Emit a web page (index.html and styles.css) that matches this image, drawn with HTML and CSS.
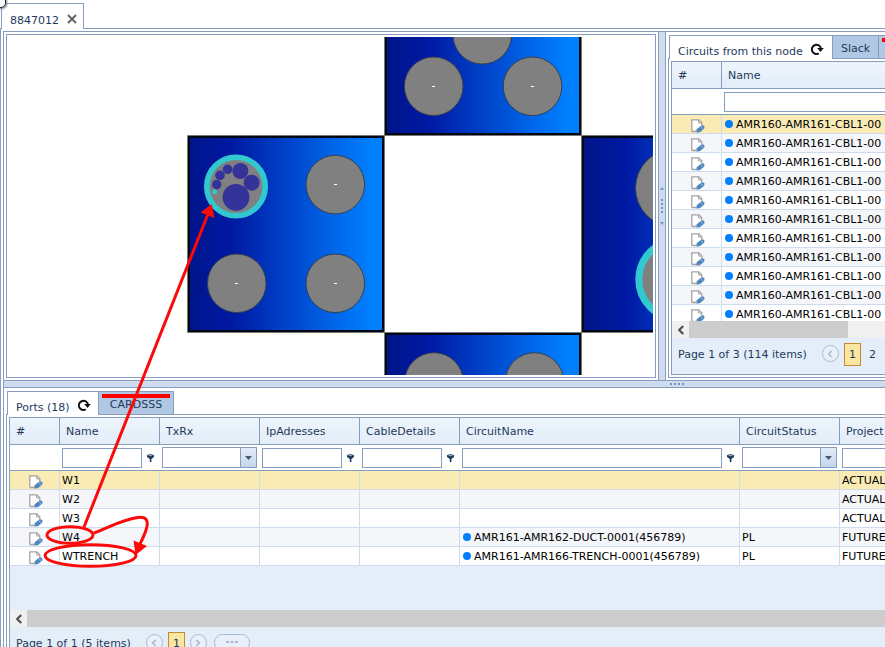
FILE: index.html
```html
<!DOCTYPE html>
<html lang="en">
<head>
<meta charset="utf-8">
<title>8847012</title>
<link rel="stylesheet" href="styles.css">
</head>
<body>
<svg class="defs" aria-hidden="true">
  <symbol id="edit" viewBox="0 0 14 14">
    <path d="M.8 12.5V.8h7l3 3v3M.8 12.5h4.4" fill="#fff" stroke="#a3a3a3" stroke-width="1.3"/>
    <path d="M7.6.8v3.2h3.2" fill="none" stroke="#a3a3a3"/>
    <path d="M5.2 13.5l.5-3.2 4.6-3.7h2.2l.9 1v1.8l-4.6 3.9z" fill="#4f86bf"/>
    <path d="M9.5 7.3l2.8 2.7" stroke="#dce8f5" stroke-width=".6"/>
  </symbol>
  <symbol id="refresh" viewBox="0 0 13 12">
    <path d="M7.8 10.3A4.6 4.6 0 1 1 10 5.8" fill="none" stroke="#111" stroke-width="2"/>
    <path d="M6.2 5h6.6L9.5 9z" fill="#111"/>
  </symbol>
  <symbol id="funnel" viewBox="0 0 7 8">
    <path d="M0 1.3Q3.5-.8 7 1.3V3L4.4 5v3H2.8V5L0 3z" fill="#1e395b"/>
    <path d="M1.5 1.6h4" stroke="#a9bad0" stroke-width=".9"/>
  </symbol>
  <symbol id="left" viewBox="0 0 8 10"><path d="M6.2 1L2.2 5l4 4" fill="none" stroke="currentColor" stroke-width="2.2"/></symbol>
  <symbol id="right" viewBox="0 0 8 10"><path d="M1.8 1l4 4-4 4" fill="none" stroke="currentColor" stroke-width="2.2"/></symbol>
  <symbol id="down" viewBox="0 0 7 4"><path d="M0 0h7L3.5 4z" fill="#44597a"/></symbol>
</svg>

<div class="app">
  <div class="corner"></div>
  <nav class="doc-tabs">
    <div class="doc-tab"><span>8847012</span>
      <button class="close" aria-label="Close tab"><svg viewBox="0 0 10 10"><path d="M1 1l8 8M9 1L1 9" stroke="#666" stroke-width="2"/></svg></button>
    </div>
  </nav>

  <main class="doc">
    <div class="split">
      <div class="upper">
        <section class="canvas-pane">
          <div class="canvas">
            <svg class="drawing" role="img" aria-label="Duct layout">
              <defs>
                <linearGradient id="wall">
                  <stop offset="0" stop-color="#00158a"/><stop offset=".22" stop-color="#0019a3"/>
                  <stop offset=".5" stop-color="#0042c8"/><stop offset=".75" stop-color="#0066ea"/>
                  <stop offset=".94" stop-color="#0080ff"/>
                </linearGradient>
              </defs>
              <g transform="translate(-9 -37)">
                <path d="M187.5 332.5V135.5H660M384.5 30V380M581.5 30V380M187.5 332.5H660" fill="none" stroke="#777"/>
                <rect x="386" y="136" width="195" height="196" fill="#fff"/>
                <g fill="url(#wall)" stroke="#000814" stroke-width="2">
                  <rect x="386" y="-61" width="194" height="195"/>
                  <rect x="189" y="137" width="194" height="194"/>
                  <rect x="583" y="137" width="194" height="194"/>
                  <rect x="386" y="334" width="194" height="194"/>
                </g>
                <g fill="#808080" stroke="#35404f">
                  <circle cx="482.3" cy="34.8" r="29.3"/><circle cx="433.7" cy="86.3" r="29.3"/><circle cx="532.5" cy="86.3" r="29.3"/>
                  <circle cx="335.3" cy="184.6" r="29.3"/><circle cx="236.8" cy="283.3" r="29.3"/><circle cx="335.3" cy="283.3" r="29.3"/>
                  <circle cx="434" cy="382" r="29.3"/><circle cx="534.5" cy="382" r="29.3"/>
                  <circle cx="674.5" cy="188" r="39"/>
                </g>
                <g fill="#808080" stroke="#32c8cf">
                  <circle cx="236" cy="186.5" r="29.2" stroke-width="5.6"/>
                  <circle cx="678" cy="279.5" r="39.2" stroke-width="7"/>
                </g>
                <g fill="#333399">
                  <circle cx="236" cy="197.3" r="13.4"/><circle cx="240.4" cy="171" r="8"/><circle cx="251.6" cy="182.7" r="8"/>
                  <circle cx="227.6" cy="169.3" r="4.8"/><circle cx="220" cy="175.4" r="4.8"/><circle cx="216.7" cy="184.6" r="4.8"/>
                </g>
                <circle cx="214.7" cy="191.7" r="2.5" fill="#32c8cf"/>
                <path d="M432 86.5h3M531 86.5h3M334 184.5h3M235 283.5h3M334 283.5h3" stroke="#fff"/>
              </g>
            </svg>
          </div>
        </section>

        <div class="bar bar-v">
          <svg viewBox="0 0 6 40"><path d="M1 4h4L3 1zM1 36h4L3 39zM2 13h2v2H2zM2 17h2v2H2zM2 21h2v2H2zM2 25h2v2H2z" fill="#7593bd"/></svg>
        </div>

        <section class="tabbed">
          <div class="tabs">
            <div class="tab active wide"><span>Circuits from this node</span><button class="icon" aria-label="Refresh circuits"><svg class="refresh"><use href="#refresh"/></svg></button></div>
            <button class="tab">Slack</button>
            <button class="tab flagged" aria-label="More"></button>
          </div>
          <div class="content">
            <div class="grid">
              <div class="body">
                <table class="circuits">
                  <colgroup><col class="c-id"><col></colgroup>
                  <thead>
                    <tr><th>#</th><th>Name</th></tr>
                    <tr class="filters"><td></td><td><input aria-label="Filter circuit name"></td></tr>
                  </thead>
                  <tbody>
                    <tr class="selected"><td><button class="edit" aria-label="Edit"><svg><use href="#edit"/></svg></button></td><td><i class="dot"></i>AMR160-AMR161-CBL1-00</td></tr>
                    <tr><td><button class="edit" aria-label="Edit"><svg><use href="#edit"/></svg></button></td><td><i class="dot"></i>AMR160-AMR161-CBL1-00</td></tr>
                    <tr><td><button class="edit" aria-label="Edit"><svg><use href="#edit"/></svg></button></td><td><i class="dot"></i>AMR160-AMR161-CBL1-00</td></tr>
                    <tr><td><button class="edit" aria-label="Edit"><svg><use href="#edit"/></svg></button></td><td><i class="dot"></i>AMR160-AMR161-CBL1-00</td></tr>
                    <tr><td><button class="edit" aria-label="Edit"><svg><use href="#edit"/></svg></button></td><td><i class="dot"></i>AMR160-AMR161-CBL1-00</td></tr>
                    <tr><td><button class="edit" aria-label="Edit"><svg><use href="#edit"/></svg></button></td><td><i class="dot"></i>AMR160-AMR161-CBL1-00</td></tr>
                    <tr><td><button class="edit" aria-label="Edit"><svg><use href="#edit"/></svg></button></td><td><i class="dot"></i>AMR160-AMR161-CBL1-00</td></tr>
                    <tr><td><button class="edit" aria-label="Edit"><svg><use href="#edit"/></svg></button></td><td><i class="dot"></i>AMR160-AMR161-CBL1-00</td></tr>
                    <tr><td><button class="edit" aria-label="Edit"><svg><use href="#edit"/></svg></button></td><td><i class="dot"></i>AMR160-AMR161-CBL1-00</td></tr>
                    <tr><td><button class="edit" aria-label="Edit"><svg><use href="#edit"/></svg></button></td><td><i class="dot"></i>AMR160-AMR161-CBL1-00</td></tr>
                    <tr><td><button class="edit" aria-label="Edit"><svg><use href="#edit"/></svg></button></td><td><i class="dot"></i>AMR160-AMR161-CBL1-00</td></tr>
                  </tbody>
                </table>
              </div>
              <div class="scroll"><button aria-label="Scroll left"><svg><use href="#left"/></svg></button><span class="thumb part"></span></div>
              <div class="pager"><span>Page 1 of 3 (114 items)</span><button class="round" aria-label="Previous page"><svg><use href="#left"/></svg></button><button class="current">1</button><a class="page" href="#p2">2</a></div>
            </div>
          </div>
        </section>
      </div>

      <div class="bar bar-h"><svg viewBox="0 0 14 2"><path d="M0 0h2v2H0zM4 0h2v2H4zM8 0h2v2H8zM12 0h2v2h-2z" fill="#7593bd"/></svg></div>

      <section class="tabbed lower">
        <div class="tabs">
          <div class="tab active"><span>Ports (18)</span><button class="icon" aria-label="Refresh ports"><svg class="refresh"><use href="#refresh"/></svg></button></div>
          <button class="tab struck">CARDSSS</button>
        </div>
        <div class="content">
          <div class="grid">
            <div class="body">
              <table class="ports">
                <colgroup><col class="c-id"><col class="c-std"><col class="c-std"><col class="c-std"><col class="c-std"><col class="c-long"><col class="c-std"><col class="c-std"></colgroup>
                <thead>
                  <tr><th>#</th><th>Name</th><th>TxRx</th><th>IpAdresses</th><th>CableDetails</th><th>CircuitName</th><th>CircuitStatus</th><th>Project</th></tr>
                  <tr class="filters">
                    <td></td>
                    <td><div class="filter"><input aria-label="Filter name"><svg><use href="#funnel"/></svg></div></td>
                    <td><div class="pick"><select aria-label="Filter TxRx"><option></option></select><span><svg><use href="#down"/></svg></span></div></td>
                    <td><div class="filter"><input aria-label="Filter IP addresses"><svg><use href="#funnel"/></svg></div></td>
                    <td><div class="filter"><input aria-label="Filter cable details"><svg><use href="#funnel"/></svg></div></td>
                    <td><div class="filter"><input aria-label="Filter circuit name"><svg><use href="#funnel"/></svg></div></td>
                    <td><div class="pick"><select aria-label="Filter circuit status"><option></option></select><span><svg><use href="#down"/></svg></span></div></td>
                    <td><div class="filter"><input aria-label="Filter project"><svg><use href="#funnel"/></svg></div></td>
                  </tr>
                </thead>
                <tbody>
                  <tr class="selected"><td><button class="edit" aria-label="Edit W1"><svg><use href="#edit"/></svg></button></td><td>W1</td><td></td><td></td><td></td><td></td><td></td><td>ACTUAL</td></tr>
                  <tr><td><button class="edit" aria-label="Edit W2"><svg><use href="#edit"/></svg></button></td><td>W2</td><td></td><td></td><td></td><td></td><td></td><td>ACTUAL</td></tr>
                  <tr><td><button class="edit" aria-label="Edit W3"><svg><use href="#edit"/></svg></button></td><td>W3</td><td></td><td></td><td></td><td></td><td></td><td>ACTUAL</td></tr>
                  <tr><td><button class="edit" aria-label="Edit W4"><svg><use href="#edit"/></svg></button></td><td>W4</td><td></td><td></td><td></td><td><i class="dot"></i>AMR161-AMR162-DUCT-0001(456789)</td><td>PL</td><td>FUTURE</td></tr>
                  <tr><td><button class="edit" aria-label="Edit WTRENCH"><svg><use href="#edit"/></svg></button></td><td>WTRENCH</td><td></td><td></td><td></td><td><i class="dot"></i>AMR161-AMR166-TRENCH-0001(456789)</td><td>PL</td><td>FUTURE</td></tr>
                </tbody>
              </table>
            </div>
            <div class="scroll"><button aria-label="Scroll left"><svg><use href="#left"/></svg></button><span class="thumb"></span></div>
            <div class="pager"><span>Page 1 of 1 (5 items)</span><button class="round" aria-label="Previous page"><svg><use href="#left"/></svg></button><button class="current">1</button><button class="round" aria-label="Next page"><svg><use href="#right"/></svg></button><button class="round pill" aria-label="More pages"><svg viewBox="0 0 12 3"><path d="M0 0h3v2H0zM4.500 0h3v2h-3zM9 0h3v2H9z" fill="#a9b9d3"/></svg></button></div>
          </div>
        </div>
      </section>
    </div>
  </main>

  <svg class="marks" aria-hidden="true">
    <g fill="none" stroke="#fb0a0a" stroke-width="3">
      <path d="M84 527L208 214"/>
      <ellipse cx="70" cy="535" rx="23" ry="8.300"/>
      <ellipse cx="90.500" cy="555.500" rx="45.500" ry="10.800"/>
      <path d="M94 533C112 526 124 519 138 517.500C147 516.500 149 521 146 530C144.500 535 142 540 140 544"/>
    </g>
    <path d="M211.700 204L200.500 212.500 214.500 218zM133.500 540.500L147 546 135.500 555z" fill="#fb0a0a"/>
  </svg>
</div>
</body>
</html>
```
FILE: styles.css
```css
:root {
  --line: #859ebf;
  --ink: #1e395b;
  --cell: #cfdcee;
  --pale: #e4eef9;
}
* { box-sizing: border-box; }
body {
  margin: 0;
  font: 11px/14px Verdana, "DejaVu Sans", sans-serif;
  color: var(--ink);
  background: #fff;
}
button, input, select { font: inherit; color: inherit; margin: 0; padding: 0; }
button { border: 0; background: none; }
svg { display: block; }
.defs { position: absolute; width: 0; height: 0; }

.app {
  position: relative;
  display: flex;
  flex-direction: column;
  height: 100vh;
  overflow: hidden;
}
.corner {
  position: absolute;
  left: -14px;
  top: -12px;
  width: 20px;
  height: 20px;
  border: 1px solid #2a2a3c;
  border-radius: 5px;
  background: #fff;
  box-shadow: 1px 1px 2px #888;
}
.marks { position: absolute; left: 0; top: 0; width: 100%; height: 100%; pointer-events: none; }

.doc-tabs { flex: none; display: flex; padding: 3px 0 0 1px; border-bottom: 1px solid var(--line); }
.doc-tab {
  display: flex;
  gap: 8px;
  width: 83px;
  height: 26px;
  margin-bottom: -1px;
  padding: 10px 0 0 8px;
  border: 1px solid var(--line);
  border-bottom: 0;
  background: #fff;
}
.close { width: 10px; height: 10px; }
.close svg { width: 10px; height: 10px; }

.doc { flex: 1; min-height: 0; display: flex; padding: 2px 0 0 2px; border-left: 1px solid var(--line); }
.split { flex: 1; min-width: 0; display: flex; flex-direction: column; border: solid var(--line); border-width: 1px 0 0 1px; }
.upper { flex: none; display: grid; grid-template: 348px / minmax(0, 1fr) 8px 219px; }
.bar { flex: none; display: flex; align-items: center; justify-content: center; background: #cfdcee; border: 0 solid var(--line); }
.bar-v { border-width: 0 1px; }
.bar-v svg { width: 6px; height: 40px; }
.bar-h { height: 8px; border-width: 1px 0; padding-left: 465px; }
.bar-h svg { width: 14px; height: 2px; }

.canvas-pane { padding: 2px; min-width: 0; }
.canvas { height: 100%; padding: 2px; border: 1px solid var(--line); }
.drawing { width: 100%; height: 100%; overflow: hidden; }

.tabbed { display: flex; flex-direction: column; min-width: 0; min-height: 0; padding: 3px 0 2px 2px; }
.lower { flex: none; }
.tabs { display: flex; flex: none; height: 24px; margin: 0 0 -1px 1px; position: relative; overflow: hidden; }
.tab {
  flex: none;
  padding: 3px 8px 0;
  border: solid var(--line);
  border-width: 1px 1px 1px 0;
  background: #b1c8e4;
}
.tab.active {
  display: flex;
  gap: 8px;
  width: 92px;
  padding: 9px 0 0 8px;
  border-width: 1px 1px 0 1px;
  background: #fff;
  white-space: nowrap;
}
.tab.active.wide { width: 164px; }
.tab.struck { width: 75px; }
.tab.struck, .tab.flagged { background: linear-gradient(#f00, #f00) 3px 2px / 68px 4px no-repeat, #b1c8e4; }
.icon { width: 13px; height: 12px; margin-top: -2px; }
.refresh { width: 13px; height: 12px; }

.content { flex: 1; min-height: 0; display: flex; padding: 2px 0 2px 2px; border: 1px solid var(--line); border-right: 0; }
.grid { flex: 1; min-width: 0; display: flex; flex-direction: column; background: var(--pale); border: 1px solid var(--line); border-right: 0; }
.body { flex: 1; min-height: 0; overflow: hidden; }
.lower .body { flex: none; height: 192px; }

table { table-layout: fixed; border-spacing: 0; background: #fff; }
.circuits { width: 400px; }
.ports { width: 930px; }
.c-id { width: 50px; }
.c-std { width: 100px; }
.c-long { width: 280px; }
th {
  height: 27px;
  padding: 2px 6px 0;
  border: solid var(--line);
  border-width: 0 1px 1px 0;
  background: linear-gradient(#edf4fc, #e3edf8);
  font-weight: normal;
  text-align: left;
}
td { height: 19px; padding: 2px 2px 0; border: solid var(--cell); border-width: 0 1px 1px 0; color: #000; white-space: nowrap; }
td:first-child { padding-top: 0; }
tbody tr:nth-child(even) { background: #f4f6fa; }
tbody tr.selected { background: #faebb5; }
.filters td { height: 26px; padding-top: 0; border-width: 0 0 1px; border-color: var(--line); }
input { display: block; width: 100%; height: 20px; border: 1px solid var(--line); background: #fff; border-radius: 0; }
.filter { display: flex; align-items: center; gap: 5px; padding-right: 4px; }
.filter input { flex: 1; min-width: 0; }
.filter svg { flex: none; width: 7px; height: 8px; }
.pick { display: grid; width: 95px; height: 21px; }
.pick select, .pick span { grid-area: 1 / 1; }
.pick select { appearance: none; width: 100%; border: 1px solid var(--line); border-radius: 0; background: #fff; }
.pick span {
  justify-self: end;
  display: flex;
  align-items: center;
  justify-content: center;
  width: 17px;
  border: 1px solid var(--line);
  background: linear-gradient(#e2ebf6, #c5d6ea);
  pointer-events: none;
}
.pick span svg { width: 7px; height: 4px; }

.edit { display: block; width: 14px; height: 14px; margin: 4px 0 0 17px; }
.edit svg { width: 14px; height: 14px; }
.dot { display: inline-block; width: 8px; height: 8px; margin: 0 3px 0 1px; border-radius: 50%; background: #0080ff; }

.scroll { flex: none; display: flex; height: 17px; background: #f0f0f0; }
.scroll button { display: flex; align-items: center; justify-content: center; width: 17px; color: #505050; }
.scroll svg { width: 8px; height: 10px; }
.thumb { flex: 1; background: #cdcdcd; }
.thumb.part { flex: 0 0 159px; }

.pager { flex: none; display: flex; align-items: flex-start; height: 36px; padding: 5px 0 0 6px; white-space: nowrap; }
.pager > span { margin: 5px 15px 0 0; }
.round {
  display: flex;
  flex: none;
  align-items: center;
  justify-content: center;
  width: 17px;
  height: 17px;
  margin-top: 2px;
  border: 1px solid #a9b9d3;
  border-radius: 9px;
  background: #e9f0fa;
  color: #a9b9d3;
}
.round svg { width: 6px; height: 8px; }
.pill { width: 36px; margin-left: 7px; }
.pill svg { width: 12px; height: 3px; }
.current { flex: none; width: 17px; height: 23px; margin: 0 5px; border: 1px solid #c58a2b; background: #f8e6a2; }
.page { margin: 5px 0 0 3px; color: inherit; text-decoration: none; }
```
